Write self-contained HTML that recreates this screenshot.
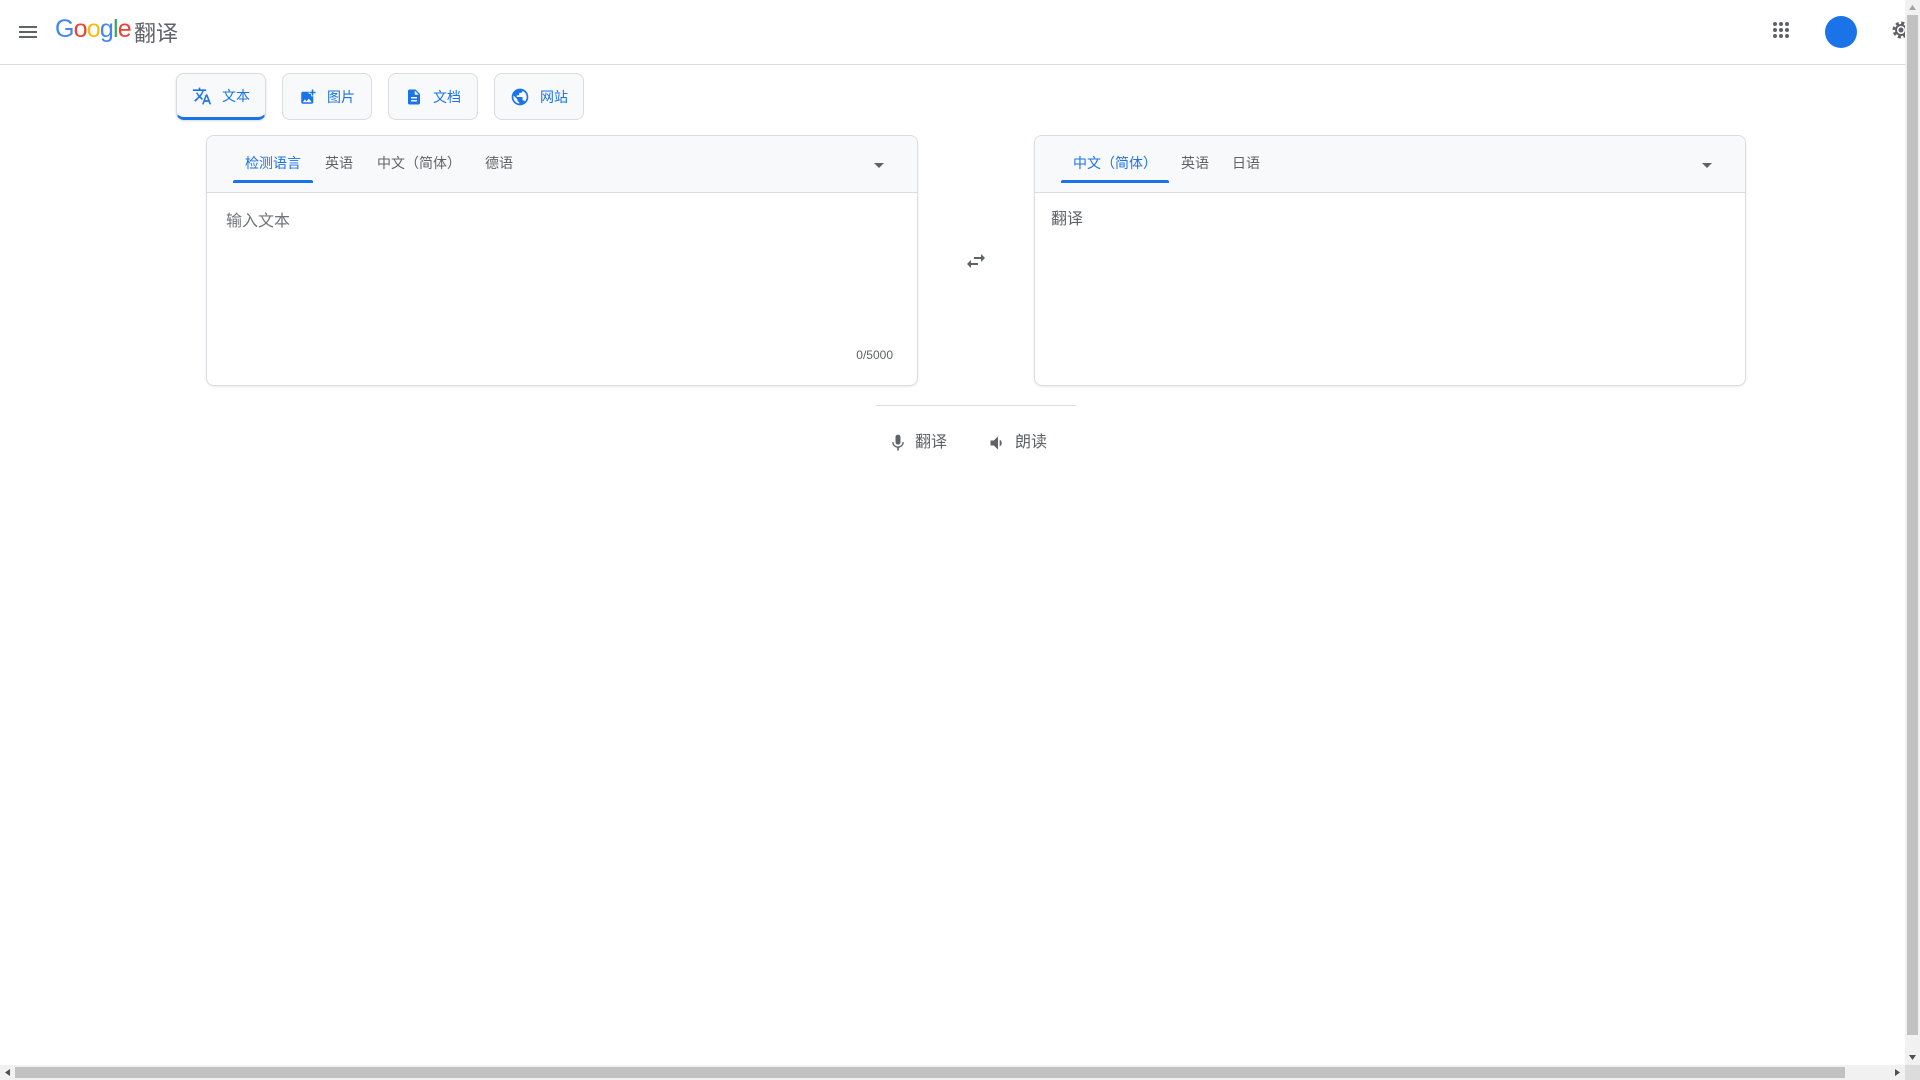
<!DOCTYPE html>
<html><head><meta charset="utf-8"><style>
*{box-sizing:border-box;margin:0;padding:0}
body{width:1920px;height:1080px;overflow:hidden;background:#fff;position:relative;font-family:"Liberation Sans","Noto Sans CJK SC",sans-serif;color:#5f6368}
.a{position:absolute}
.hdr{left:0;top:0;width:1905px;height:65px;border-bottom:1px solid #dadce0}
.tab{top:73px;height:47px;width:90px;border:1px solid #dadce0;border-radius:8px;background:#f8f9fa;color:#1a73e8;font-size:14px;display:flex;align-items:center;justify-content:center;gap:10px}
.panel{top:135px;width:712px;height:251px;border:1px solid #dadce0;border-radius:8px;overflow:hidden;box-shadow:0 1px 2px rgba(0,0,0,.08)}
.ph{left:0;top:0;width:100%;height:57px;background:#f8f9fa;border-bottom:1px solid #dadce0}
.lt{top:17px;font-size:14px;color:#5f6368}
.ul{top:44px;height:3px;background:#1a73e8;border-radius:2px 2px 0 0}
</style></head><body>
<div class="a hdr"></div>
<svg class="a" style="left:16px;top:20px" width="24" height="24" viewBox="0 0 24 24"><path d="M3 6h18v2H3zm0 5h18v2H3zm0 5h18v2H3z" fill="#5f6368"/></svg>
<div class="a" style="left:55px;top:15px;font-size:25px;letter-spacing:-0.8px;font-family:'Liberation Sans',sans-serif"><span style="color:#4285f4">G</span><span style="color:#ea4335">o</span><span style="color:#fbbc05">o</span><span style="color:#4285f4">g</span><span style="color:#34a853">l</span><span style="color:#ea4335">e</span></div>
<div class="a" style="left:134px;top:16px;font-size:22px;color:#5f6368">翻译</div>
<svg class="a" style="left:1769px;top:18px" width="24" height="24" viewBox="0 0 24 24" fill="#5f6368"><circle cx="6" cy="6" r="2"/><circle cx="12" cy="6" r="2"/><circle cx="18" cy="6" r="2"/><circle cx="6" cy="12" r="2"/><circle cx="12" cy="12" r="2"/><circle cx="18" cy="12" r="2"/><circle cx="6" cy="18" r="2"/><circle cx="12" cy="18" r="2"/><circle cx="18" cy="18" r="2"/></svg>
<div class="a" style="left:1825px;top:16px;width:32px;height:32px;border-radius:50%;background:#1a73e8"></div>
<svg class="a" style="left:1889px;top:18px" width="24" height="24" viewBox="0 0 24 24"><circle cx="12" cy="12" r="7" fill="none" stroke="#5f6368" stroke-width="3" stroke-dasharray="3 2.5"/><circle cx="12" cy="12" r="5" fill="none" stroke="#5f6368" stroke-width="2"/><circle cx="12" cy="12" r="2.5" fill="#5f6368"/></svg>

<div class="a tab" style="left:176px;border-bottom:3px solid #1a73e8;box-shadow:0 1px 2px rgba(0,0,0,.15)"><svg width="20" height="20" viewBox="0 0 24 24" fill="#1a73e8"><path d="M12.87 15.07l-2.54-2.51.03-.03A17.5 17.5 0 0014.07 6H17V4h-7V2H8v2H1v2h11.17C11.5 7.92 10.44 9.750 9 11.35 8.07 10.32 7.3 9.19 6.690 8h-2c.73 1.63 1.73 3.17 2.98 4.56l-5.09 5.02L4 19l5-5 3.11 3.11.76-2.04zM18.5 10h-2L12 22h2l1.12-3h4.75L21 22h2l-4.5-12zm-2.62 7l1.62-4.33L19.12 17h-3.24z"/></svg>文本</div>
<div class="a tab" style="left:282px"><svg width="18" height="18" viewBox="0 0 24 24" fill="#1a73e8"><path d="M19 7v2.99s-1.99.01-2 0V7h-3s.01-1.99 0-2h3V2h2v3h3v2h-3zm-3 4V8h-3V5H5c-1.1 0-2 .9-2 2v12c0 1.1.9 2 2 2h12c1.1 0 2-.9 2-2v-8h-3zM5 19l3-4 2 3 3-4 4 5H5z"/></svg>图片</div>
<div class="a tab" style="left:388px"><svg width="18" height="18" viewBox="0 0 24 24" fill="#1a73e8"><path d="M14 2H6c-1.1 0-2 .9-2 2v16c0 1.1.9 2 2 2h12c1.1 0 2-.9 2-2V8l-6-6zm2 16H8v-2h8v2zm0-4H8v-2h8v2zm-3-5V3.5L18.5 9H13z"/></svg>文档</div>
<div class="a tab" style="left:494px"><svg width="20" height="20" viewBox="0 0 24 24" fill="#1a73e8"><path d="M12 2C6.48 2 2 6.48 2 12s4.48 10 10 10 10-4.48 10-10S17.52 2 12 2zm-1 17.93c-3.95-.49-7-3.85-7-7.930 0-.62.08-1.21.21-1.79L9 15v1c0 1.1.9 2 2 2v1.93zm6.9-2.54c-.26-.81-1-1.39-1.9-1.39h-1v-3c0-.55-.45-1-1-1H8v-2h2c.55 0 1-.45 1-1V7h2c1.1 0 2-.9 2-2v-.41c2.93 1.19 5 4.06 5 7.41 0 2.08-.8 3.97-2.1 5.39z"/></svg>网站</div>

<div class="a panel" style="left:206px">
 <div class="a ph"></div>
 <div class="a lt" style="left:38px;color:#1a73e8">检测语言</div>
 <div class="a ul" style="left:26px;width:80px"></div>
 <div class="a lt" style="left:118px">英语</div>
 <div class="a lt" style="left:170px">中文（简体）</div>
 <div class="a lt" style="left:278px">德语</div>
 <svg class="a" style="left:665px;top:22px" width="14" height="14" viewBox="0 0 14 14"><path d="M2 5l5 5 5-5z" fill="#5f6368"/></svg>
 <div class="a" style="left:19px;top:71px;font-size:16px;color:#70757a">输入文本</div>
 <div class="a" style="right:24px;top:212px;font-size:12px;color:#5f6368">0/5000</div>
</div>
<svg class="a" style="left:964px;top:249px" width="24" height="24" viewBox="0 0 24 24" fill="#5f6368"><path d="M6.99 11L3 15l3.99 4v-3H14v-2H6.99v-3zM21 9l-3.99-4v3H10v2h7.01v3L21 9z"/></svg>
<div class="a panel" style="left:1034px">
 <div class="a ph"></div>
 <div class="a lt" style="left:38px;color:#1a73e8">中文（简体）</div>
 <div class="a ul" style="left:26px;width:108px"></div>
 <div class="a lt" style="left:146px">英语</div>
 <div class="a lt" style="left:197px">日语</div>
 <svg class="a" style="left:665px;top:22px" width="14" height="14" viewBox="0 0 14 14"><path d="M2 5l5 5 5-5z" fill="#5f6368"/></svg>
 <div class="a" style="left:16px;top:69px;font-size:16px;color:#5f6368">翻译</div>
</div>
<div class="a" style="left:876px;top:405px;width:200px;height:1px;background:#dadce0"></div>
<svg class="a" style="left:888px;top:433px" width="20" height="20" viewBox="0 0 24 24" fill="#5f6368"><path d="M12 14c1.66 0 3-1.34 3-3V5c0-1.66-1.34-3-3-3S9 3.34 9 5v6c0 1.66 1.34 3 3 3zm5.3-3c0 3-2.54 5.1-5.3 5.1S6.7 14 6.7 11H5c0 3.41 2.72 6.23 6 6.72V21h2v-3.28c3.28-.48 6-3.3 6-6.72h-1.7z"/></svg>
<div class="a" style="left:915px;top:428px;font-size:16px;color:#5f6368">翻译</div>
<svg class="a" style="left:988px;top:433px" width="20" height="20" viewBox="0 0 24 24" fill="#5f6368"><path d="M3 9v6h4l5 5V4L7 9H3zm13.5 3c0-1.77-1.02-3.29-2.5-4.03v8.05c1.48-.73 2.5-2.25 2.5-4.02z"/></svg>
<div class="a" style="left:1015px;top:428px;font-size:16px;color:#5f6368">朗读</div>

<div class="a" style="left:1905px;top:0;width:15px;height:1065px;background:#f1f1f1"></div>
<div class="a" style="left:1907px;top:15px;width:11px;height:1020px;background:#c1c1c1"></div>
<svg class="a" style="left:1905px;top:0" width="15" height="15"><path d="M4 10h7L7.5 5z" fill="#a3a3a3"/></svg>
<svg class="a" style="left:1905px;top:1050px" width="15" height="15"><path d="M4 5h7L7.5 10z" fill="#505050"/></svg>
<div class="a" style="left:0;top:1065px;width:1905px;height:15px;background:#f1f1f1"></div>
<div class="a" style="left:15px;top:1067px;width:1830px;height:11px;background:#c1c1c1"></div>
<svg class="a" style="left:0;top:1065px" width="15" height="15"><path d="M10 4v7L5 7.5z" fill="#505050"/></svg>
<svg class="a" style="left:1890px;top:1065px" width="15" height="15"><path d="M5 4v7L10 7.5z" fill="#505050"/></svg>
<div class="a" style="left:1905px;top:1065px;width:15px;height:15px;background:#dcdcdc"></div>
</body></html>
